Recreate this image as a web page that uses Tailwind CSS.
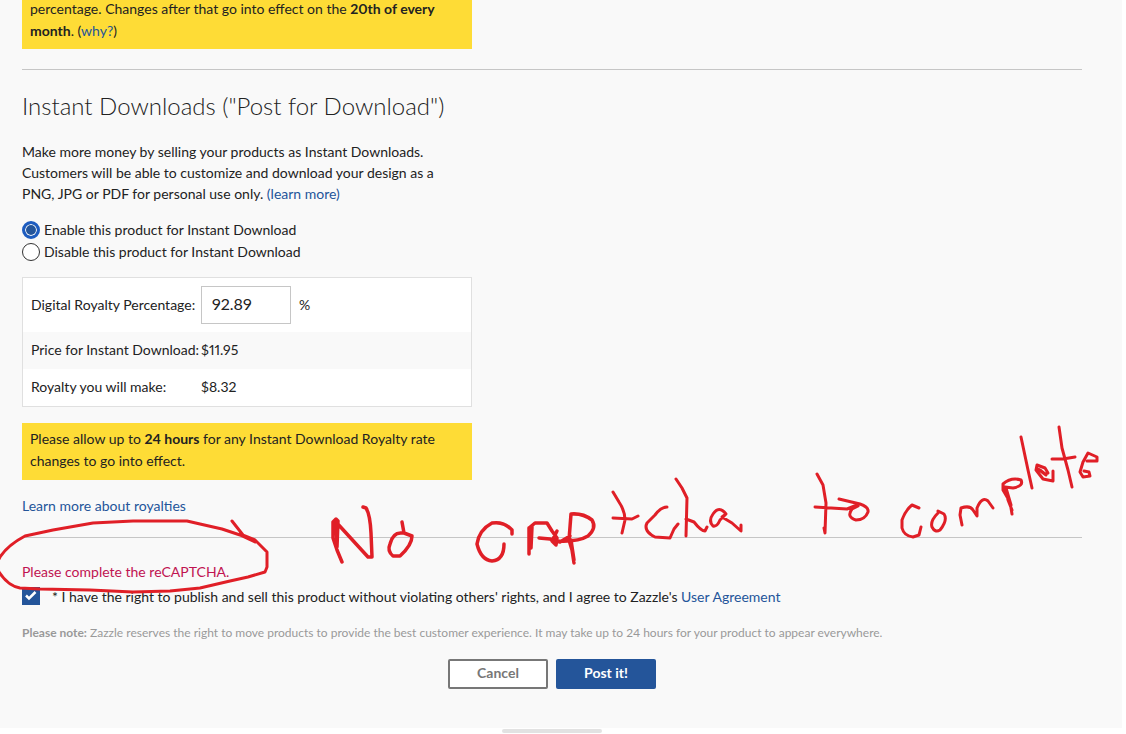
<!DOCTYPE html>
<html lang="en">
<head>
  <meta charset="UTF-8">
  <meta name="viewport" content="width=device-width, initial-scale=1.0">
  <title>Post for Download</title>
  <script src="https://cdn.jsdelivr.net/npm/@tailwindcss/browser@4"></script>
</head>
<body class="bg-white font-[Lato,sans-serif] text-sm leading-[22px] text-[#222] proportional-nums">
<div class="relative overflow-hidden">
  <main class="mr-1 bg-[#f9f9f9] pl-[22px] pr-10 pb-[39px]">
    <div class="-mt-[2px] max-w-[450px] bg-[#fedc36] px-2 pb-[7px]">
      percentage. Changes after that go into effect on the <b>20th of every month</b>. (<a href="#" class="text-[#24559a]">why?</a>)
    </div>

    <hr class="mt-5 border-[#c6c6c6]">

    <section class="max-w-[450px]">
      <h2 class="mt-5 text-2xl leading-8 font-light">Instant Downloads ("Post for Download")</h2>
      <p class="mt-[19px] max-w-[430px] leading-[21px]">Make more money by selling your products as Instant Downloads. Customers will be able to customize and download your design as a PNG, JPG or PDF for personal use only. <a href="#" class="text-[#24559a]">(learn more)</a></p>

      <div class="mt-[15px]">
        <label class="flex items-center gap-1">
          <input type="radio" name="download" checked class="size-[18px] appearance-none rounded-full border border-[#333] bg-white checked:border-3 checked:border-[#1d5cc0] checked:bg-[#24559a] checked:inset-ring checked:inset-ring-white">
          Enable this product for Instant Download
        </label>
        <label class="flex items-center gap-1">
          <input type="radio" name="download" class="size-[18px] appearance-none rounded-full border border-[#333] bg-white checked:border-3 checked:border-[#1d5cc0] checked:bg-[#24559a] checked:inset-ring checked:inset-ring-white">
          Disable this product for Instant Download
        </label>
      </div>

      <div class="mt-[14px] border border-[#e0e0e0] bg-white">
        <table class="w-full">
          <tr class="h-[54px]">
            <th class="w-[178px] pl-2 text-left font-normal"><label for="royalty">Digital Royalty Percentage:</label></th>
            <td>
              <div class="flex items-center gap-2">
                <input id="royalty" type="text" value="92.89" class="h-[38px] w-[90px] border border-[#c6c6c6] px-[10px] pb-[3px] text-base">
                <span>%</span>
              </div>
            </td>
          </tr>
          <tr class="h-[37px] bg-[#f9f9f9]">
            <th class="pb-[2px] pl-2 text-left font-normal">Price for Instant Download:</th>
            <td class="pb-[2px]">$11.95</td>
          </tr>
          <tr class="h-[37px]">
            <th class="pb-[2px] pl-2 text-left font-normal">Royalty you will make:</th>
            <td class="pb-[2px]">$8.32</td>
          </tr>
        </table>
      </div>

      <div class="mt-4 bg-[#fedc36] px-2 pt-[5px] pb-2">
        Please allow up to <b>24 hours</b> for any Instant Download Royalty rate changes to go into effect.
      </div>
      <p class="mt-[15px]"><a href="#" class="text-[#24559a]">Learn more about royalties</a></p>
    </section>

    <hr class="mt-5 border-[#c6c6c6]">

    <p class="mt-[23px] text-[#c01351]">Please complete the reCAPTCHA.</p>
    <div class="mt-[3px] flex">
      <span class="relative mt-px mr-3 size-[18px]">
        <input id="agree" type="checkbox" checked class="block size-[18px] appearance-none border border-[#24559a] checked:bg-[#24559a]">
        <svg class="pointer-events-none absolute inset-0" width="18" height="18" viewBox="0 0 18 18" fill="none" stroke="#fff" stroke-width="2.5"><path d="M4 8.5l3 3 6.500-6.500"/></svg>
      </span>
      <label for="agree">* I have the right to publish and sell this product without violating others' rights, and I agree to Zazzle's <a href="#" class="text-[#24559a]">User Agreement</a></label>
    </div>
    <p class="mt-[14px] text-xs leading-[22px] text-[#999]"><b>Please note:</b> Zazzle reserves the right to move products to provide the best customer experience. It may take up to 24 hours for your product to appear everywhere.</p>

    <div class="mt-[15px] flex justify-center gap-2">
      <button class="h-[30px] w-[100px] rounded-xs border-2 border-[#777] bg-white pb-[2px] font-bold text-[#777]">Cancel</button>
      <button class="h-[30px] w-[100px] rounded-xs bg-[#24559a] pb-[2px] font-bold text-white">Post it!</button>
    </div>
  </main>
  <div class="ml-[502px] mt-px h-1 w-[100px] rounded-full bg-[#e2e2e2]"></div>

  <!-- red pen notes drawn over the form -->
  <svg class="pointer-events-none absolute top-0 left-0" width="1126" height="734" viewBox="0 0 1126 734" fill="none" stroke="#e01f27" stroke-width="3" stroke-linecap="round" stroke-linejoin="round">
    <!-- circle -->
    <path d="M232 521L243 535M255 542L240 535L222 529L200 524L187 521H133L93 523L53 530L25 536Q8 545 0 557L-4 565L-1 572Q8 586 20 588L40 589L90 590L133 592L170 591L200 588L230 581L248 577L265 572L267 567V552L255 540L240 534"/>
    <!-- No -->
    <path stroke-width="3.500" d="M342 562L337 550L333 538V522L336 519L338 521L337 547L336 522L368 557H372L371 533Q370 514 366 508L363 507"/>
    <path stroke-width="3.500" d="M402 522L404 533L412 536Q412 545 400 556H393Q387 551 390 544Q393 532 402 533"/>
    <!-- captcha -->
    <path stroke-width="3.500" d="M512 534V530Q504 521 492 523Q479 530 477 544Q481 560 492 561Q504 560 504 544"/>
    <path stroke-width="3.500" d="M529 554V528L532 527L531 548M529 528L535 523H547L552 531L557 538L556 545L552 541L557 531M539 538L550 539L560 542L570 536M574 563L572 550L569 540L571 514Q583 513 592 520Q597 528 588 536Q578 542 558 541M574 560L571 540"/>
    <path d="M613 492L619 502Q625 511 625 520L622 533M613 518L632 519L638 516"/>
    <path d="M667 507Q661 507 655 515L647 523Q643 531 655 537L670 538L674 529L678 524"/>
    <path d="M676 479L682 488L687 498L686 536M686 519L694 522Q701 531 705 531L707 527"/>
    <path d="M726 514Q719 505 713 514Q708 521 713 526Q717 527 720 520L726 514L722 517L732 523L741 531V525"/>
    <!-- to -->
    <path d="M817 474L823 485L826 503L825 533L824 528M815 507L847 509L857 505M839 499L860 504Q869 507 868 512Q865 520 856 520Q846 517 852 509L858 506"/>
    <!-- complete -->
    <path d="M919 508L912 505Q905 511 902 520L902 528Q904 536 913 537L919 535L921 527M938 513Q930 521 932 527Q935 533 940 530Q948 520 944 514L938 511"/>
    <path d="M962 525L960 515L961 508Q970 505 973 510L977 516V508Q982 496 988 501L993 508"/>
    <path d="M1012 514L1010 502L1003 490V484Q1011 477 1021 480Q1024 486 1013 488L1005 487L1008 500L1012 510M1006 488L1011 505"/>
    <path d="M1021 437L1028 470L1032 488M1040 470L1045 474L1048 473L1045 468L1037 465L1036 470L1043 479L1053 481V471M1038 469L1046 475"/>
    <path d="M1059 427L1062 448L1068 470L1072 487M1052 459L1063 459L1075 457M1087 461L1097 461V457L1088 453L1083 462L1080 472L1083 477L1090 476L1089 472L1084 471"/>
  </svg>
</div>
</body>
</html>
